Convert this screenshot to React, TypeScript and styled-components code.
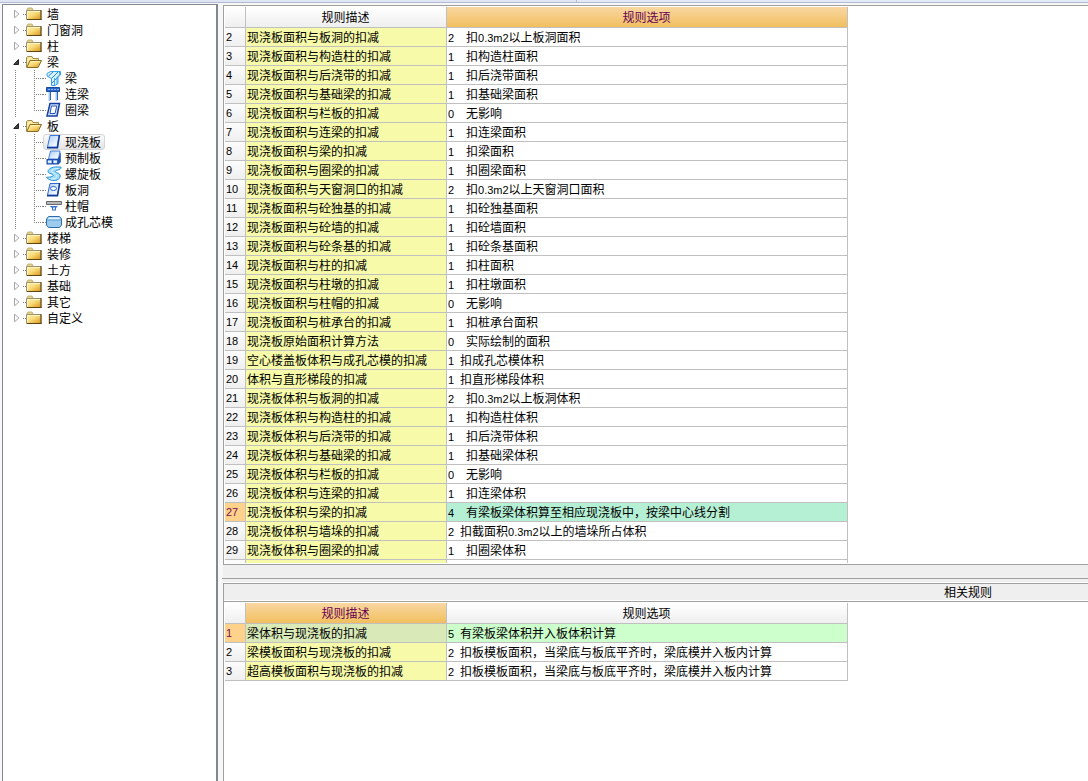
import React, { useState } from "react";
import styled, { createGlobalStyle, css } from "styled-components";

const dotsDown = "repeating-linear-gradient(to bottom, #808080 0 1px, transparent 1px 2px)";
const dotsRight = "repeating-linear-gradient(to right, #808080 0 1px, transparent 1px 2px)";

const GlobalStyle = createGlobalStyle`
  * { box-sizing: border-box; }
  body {
    margin: 0;
    background: #f7f7f8;
    color: #000;
    font: 12px/16px "Noto Sans CJK SC", sans-serif;
  }
`;

const Page = styled.div`
  display: flex;
  flex-direction: column;
  min-height: 100vh;
`;

const TopEdge = styled.div`
  display: flex;
  height: 3px;
  border-bottom: 1px solid #b3bbd2;
`;

const TopEdgePart = styled.div<{ $wide?: boolean }>`
  flex: ${(p) => (p.$wide ? "53 1 0" : "47 1 0")};
  background: ${(p) => (p.$wide ? "#dfe5f3" : "#e4e9f8")};
  border-right: ${(p) => (p.$wide ? "1px solid #b3bbd2" : "0")};
`;

const Workspace = styled.div`
  display: flex;
  flex: 1;
`;

const TreePanel = styled.nav`
  flex: 0 0 216px;
  margin: 1px 5px 0 2px;
  padding-top: 1px;
  border: solid #828790;
  border-width: 1px 2px 0 1px;
  background: #fff;
`;

const TreeList = styled.ul`
  margin: 0;
  padding: 0;
  list-style: none;
`;

const TreeRow = styled.div`
  display: flex;
  height: 16px;
`;

const Toggle = styled.button`
  display: flex;
  align-items: center;
  width: 20px;
  padding: 0 0 0 10px;
  border: 0;
  background: none;
`;

const Branch = styled.span<{ $last: boolean }>`
  width: 40px;
  background:
    ${dotsDown} 12px 0 / 1px 100% no-repeat,
    ${dotsDown} 31px 0 / 1px ${(p) => (p.$last ? "9px" : "100%")} no-repeat,
    ${dotsRight} 33px 8px / 7px 1px no-repeat;
`;

const Node = styled.button<{ $nested?: boolean; $selected?: boolean }>`
  display: flex;
  align-items: center;
  gap: ${(p) => (p.$nested ? 3 : 5)}px;
  padding: 0 3px 0 2px;
  border: 1px solid transparent;
  border-radius: 3px;
  color: inherit;
  font: inherit;
  line-height: 14px;
  white-space: nowrap;
  background: ${dotsRight} 0 8px / 3px 1px no-repeat border-box;
  ${(p) =>
    p.$selected &&
    css`
      border-color: #d6d6d6;
      background: linear-gradient(#fafafa, #e4e4e4);
    `}
`;

const Icon = styled.svg`
  flex: none;
  display: block;
`;

const Content = styled.main`
  display: flex;
  flex: 1;
  flex-direction: column;
  min-width: 0;
  padding-top: 2px;
`;

const GridPanel = styled.section<{ $fill?: boolean }>`
  flex: ${(p) => (p.$fill ? "1 0 auto" : "0 0 560px")};
  padding: 1px 0 0 1px;
  border: solid #a0a0a0;
  border-width: 1px 0 ${(p) => (p.$fill ? 0 : 1)}px 1px;
  background: #fff;
  overflow: hidden;
`;

const GridView = styled.div`
  height: 556px;
  overflow: hidden;
`;

const Splitter = styled.div`
  height: 18px;
  padding-top: 13px;
  background: #efefef;
  border-bottom: 1px solid #fff;
`;

const SplitterLine = styled.div`
  height: 1px;
  margin-left: -1px;
  background: #a0a0a0;
`;

const PanelTitle = styled.h2`
  height: 18px;
  margin: 0;
  padding-right: 96px;
  border: solid #a0a0a0;
  border-width: 1px 0 0 1px;
  box-shadow: inset 0 -1px #fff;
  background: #efefef;
  font-size: 12px;
  font-weight: 400;
  line-height: 16px;
  text-align: right;
`;

const Grid = styled.table`
  width: 623px;
  table-layout: fixed;
  border-collapse: separate;
  border-spacing: 0;
`;

const Col = styled.col<{ $w: number }>`
  width: ${(p) => p.$w}px;
`;

const cellLines = css`
  border: solid #c0c0c0;
  border-width: 0 1px 1px 0;
  overflow: hidden;
  white-space: nowrap;
`;

const HeadCell = styled.th<{ $active?: boolean }>`
  ${cellLines}
  height: 21px;
  padding: 0 1px 0 0;
  font-weight: 400;
  line-height: 20px;
  color: ${(p) => (p.$active ? "#660055" : "#000")};
  background: ${(p) =>
    p.$active ? "linear-gradient(#f9d7a2, #f1bf5e)" : "linear-gradient(#ffffff, #efefef)"};
`;

const RowNumber = styled.th<{ $active?: boolean }>`
  ${cellLines}
  height: 19px;
  padding: 0 0 0 1px;
  font: 400 11px/16px "Liberation Sans", sans-serif;
  text-align: left;
  vertical-align: middle;
  color: ${(p) => (p.$active ? "#7a1050" : "#000")};
  background: ${(p) => (p.$active ? "#ffd28c" : "linear-gradient(#fcfcfc, #efefef)")};
`;

const Cell = styled.td<{ $bg?: string }>`
  ${cellLines}
  height: 19px;
  padding: 0 0 0 1px;
  line-height: 16px;
  vertical-align: middle;
  background: ${(p) => p.$bg || "#fff"};
`;

const Latin = styled.span`
  font-family: "Liberation Sans", sans-serif;
  font-size: 11px;
  line-height: 12px;
`;

const Code = styled(Latin)<{ $wide: boolean }>`
  display: inline-block;
  width: ${(p) => (p.$wide ? 18 : 12)}px;
`;

type Shape =
  | "folder" | "open" | "beam" | "link" | "ring" | "slab"
  | "precast" | "spiral" | "hole" | "cap" | "core";

const drawings: Record<Shape, React.ReactNode> = {
  folder: (
    <>
      <path d="M1 3.5 L2 2 H6 L7 3.5 V5 H1 Z" fill="#e9d68e" stroke="#a8955b" strokeWidth="0.7" />
      <path d="M0.5 4.5 H15 V13.5 H0.5 Z" fill="url(#gold)" stroke="#9c906e" />
      <path d="M1 13.5 H15.5 M15 4 V14" stroke="#5c4311" fill="none" />
      <path d="M1.5 12.5 V5.5 H14" stroke="#fff6bd" fill="none" />
    </>
  ),
  open: (
    <>
      <path d="M0.5 13 V3.5 L2 2.5 H6 L7 4.5 H12.5 V7" fill="#f7e9a0" stroke="#a18c4f" />
      <path d="M4 6.5 H15.5 L12 13.5 H0.8 Z" fill="url(#gold)" stroke="#8a6a22" />
      <path d="M4.7 7.5 H14" stroke="#fff3ae" />
    </>
  ),
  beam: (
    <>
      <path d="M1 3.5 L4.5 1.5 H14.5 V5 L12 7 V13.5 L9 15.5 H5.5 V8.5 L1 6 Z" fill="#d5f0ff" stroke="#3aa0e4" />
      <path d="M2.5 6 L7 2 M5.5 8.5 L12 2 M6 13 L12 7" stroke="#2387d6" />
      <path d="M13.5 2 V5 L11 7.5 V14 M8.5 8 V15" stroke="#4ba7e6" fill="none" />
    </>
  ),
  link: (
    <>
      <path d="M0.5 1.5 H13.5 V5.5 H0.5 Z" fill="#2d66c4" stroke="#174a9e" />
      <path d="M2 3.5 H13" stroke="#82b0f0" strokeDasharray="2 1" />
      <path d="M3.5 6 V15 M10.5 6 V15" stroke="#a5c8f7" strokeWidth="2" />
      <path d="M4.5 6 V14 M11.5 6 V14" stroke="#2864c8" />
    </>
  ),
  ring: (
    <>
      <path d="M4 1.5 H13.5 L11 14 H1 Z" fill="#cfe3ff" stroke="#173f9f" strokeWidth="1.5" />
      <path d="M5.5 4 H10.8 L9 11.5 H4 Z" fill="#fff" stroke="#2456bd" />
    </>
  ),
  slab: (
    <>
      <path d="M4 1.5 H13 L11 13 H1.5 Z" fill="url(#glass)" stroke="#3c79dc" />
      <path d="M13.5 1 L11.5 13.8 H1" stroke="#143c99" strokeWidth="1.5" fill="none" />
    </>
  ),
  precast: (
    <>
      <path d="M4.5 1 H14 L12.5 9 H2.5 Z" fill="url(#glass)" stroke="#4c80d8" />
      <path d="M0.5 9 H12 L14.8 2 V12 L12.5 14.5 H0.5 Z" fill="#1d4db0" />
      <path d="M2 10.5 H5.5 V13 H2 Z M7.5 10.5 H11 V13 H7.5 Z" fill="#f2f9ff" stroke="#9cc6f5" strokeWidth="0.6" />
    </>
  ),
  spiral: (
    <>
      <path
        d="M15 1 C11 1 8 0.5 5 2 C1 4 1 7 5 7.8 C8 8.5 8 10 5 10.8 C3 11.3 1 11.3 0.5 11.5 C3 14 7 15.5 11 14 C15.5 12 15 8 11.5 7 C8.5 6 8.5 5 11 4.2 C13.5 3.5 15.5 3 15 1 Z"
        fill="#9fdcf8"
        stroke="#2a92d8"
      />
      <path d="M12.5 2.5 C8 2.5 4.5 3.5 5.5 5.5 C7 7 11 8 11 10 C11 12 8 13 5 12.7" stroke="#dcf5ff" fill="none" />
    </>
  ),
  hole: (
    <>
      <path d="M4 1.5 H13.5 L11.5 13 H1.5 Z" fill="url(#glass)" stroke="#3567c8" />
      <path d="M13.7 1 L11.5 13.8 H1" stroke="#143c99" strokeWidth="1.5" fill="none" />
      <ellipse cx="7.5" cy="6.5" rx="3" ry="2" fill="#fff" stroke="#1f62d0" />
    </>
  ),
  cap: (
    <>
      <path d="M0.5 3.5 H15.5 V6.5 H0.5 Z" fill="#b8b8b8" stroke="#6a6a6a" />
      <path d="M3.5 8 H12 L10 10 V12.5 H6 V10 Z" fill="#3c76d0" />
      <path d="M7 9.5 H9 V11.5 H7 Z" fill="#dcecff" />
    </>
  ),
  core: (
    <>
      <path d="M2.5 2.5 H13.5 L15.5 5 V11 L13.5 13.5 H2.5 L0.5 11 V5 Z" fill="#9dcbee" stroke="#2d6cab" />
      <path d="M1.5 5.5 L3 3.5 H13 L14.5 5.5 Z" fill="#e3f4ff" />
      <path d="M1 6 H15" stroke="#5b9fd3" />
    </>
  ),
};

function Glyph({ shape }: { shape: Shape }) {
  return (
    <Icon width="16" height="16" viewBox="0 0 16 16" fill="none" aria-hidden="true">
      {drawings[shape]}
    </Icon>
  );
}

function Gradients() {
  return (
    <Icon width="0" height="0" aria-hidden="true">
      <defs>
        <linearGradient id="gold" x1="0" y1="0" x2="1" y2="1">
          <stop offset="0" stopColor="#fff3a6" />
          <stop offset="0.45" stopColor="#f8dc7e" />
          <stop offset="1" stopColor="#dc9412" />
        </linearGradient>
        <linearGradient id="glass" x1="0" y1="0" x2="1" y2="1">
          <stop offset="0" stopColor="#a9cbfa" />
          <stop offset="0.7" stopColor="#ecf5ff" />
          <stop offset="1" stopColor="#ffffff" />
        </linearGradient>
      </defs>
    </Icon>
  );
}

function Arrow({ open }: { open: boolean }) {
  return (
    <Icon width="8" height="10" viewBox="0 0 8 10" aria-hidden="true">
      {open ? (
        <path d="M5.5 2.5 V7.5 H0.8 Z" fill="#404040" stroke="#222" />
      ) : (
        <path d="M1.5 1.2 L5.8 5 L1.5 8.8 Z" fill="#fff" stroke="#a6a6a6" />
      )}
    </Icon>
  );
}

type Child = [string, Shape];
const tree: { name: string; children?: Child[] }[] = [
  { name: "墙" },
  { name: "门窗洞" },
  { name: "柱" },
  { name: "梁", children: [["梁", "beam"], ["连梁", "link"], ["圈梁", "ring"]] },
  {
    name: "板",
    children: [
      ["现浇板", "slab"],
      ["预制板", "precast"],
      ["螺旋板", "spiral"],
      ["板洞", "hole"],
      ["柱帽", "cap"],
      ["成孔芯模", "core"],
    ],
  },
  { name: "楼梯" },
  { name: "装修" },
  { name: "土方" },
  { name: "基础" },
  { name: "其它" },
  { name: "自定义" },
];

// [description, option code, option text, narrow gap after the code]
type Rule = [string, number, string, boolean?];

const rules: Rule[] = [
  ["现浇板面积与板洞的扣减", 2, "扣0.3m2以上板洞面积"],
  ["现浇板面积与构造柱的扣减", 1, "扣构造柱面积"],
  ["现浇板面积与后浇带的扣减", 1, "扣后浇带面积"],
  ["现浇板面积与基础梁的扣减", 1, "扣基础梁面积"],
  ["现浇板面积与栏板的扣减", 0, "无影响"],
  ["现浇板面积与连梁的扣减", 1, "扣连梁面积"],
  ["现浇板面积与梁的扣减", 1, "扣梁面积"],
  ["现浇板面积与圈梁的扣减", 1, "扣圈梁面积"],
  ["现浇板面积与天窗洞口的扣减", 2, "扣0.3m2以上天窗洞口面积"],
  ["现浇板面积与砼独基的扣减", 1, "扣砼独基面积"],
  ["现浇板面积与砼墙的扣减", 1, "扣砼墙面积"],
  ["现浇板面积与砼条基的扣减", 1, "扣砼条基面积"],
  ["现浇板面积与柱的扣减", 1, "扣柱面积"],
  ["现浇板面积与柱墩的扣减", 1, "扣柱墩面积"],
  ["现浇板面积与柱帽的扣减", 0, "无影响"],
  ["现浇板面积与桩承台的扣减", 1, "扣桩承台面积"],
  ["现浇板原始面积计算方法", 0, "实际绘制的面积"],
  ["空心楼盖板体积与成孔芯模的扣减", 1, "扣成孔芯模体积", true],
  ["体积与直形梯段的扣减", 1, "扣直形梯段体积", true],
  ["现浇板体积与板洞的扣减", 2, "扣0.3m2以上板洞体积"],
  ["现浇板体积与构造柱的扣减", 1, "扣构造柱体积"],
  ["现浇板体积与后浇带的扣减", 1, "扣后浇带体积"],
  ["现浇板体积与基础梁的扣减", 1, "扣基础梁体积"],
  ["现浇板体积与栏板的扣减", 0, "无影响"],
  ["现浇板体积与连梁的扣减", 1, "扣连梁体积"],
  ["现浇板体积与梁的扣减", 4, "有梁板梁体积算至相应现浇板中，按梁中心线分割"],
  ["现浇板体积与墙垛的扣减", 2, "扣截面积0.3m2以上的墙垛所占体积", true],
  ["现浇板体积与圈梁的扣减", 1, "扣圈梁体积"],
];

const related: Rule[] = [
  ["梁体积与现浇板的扣减", 5, "有梁板梁体积并入板体积计算", true],
  ["梁模板面积与现浇板的扣减", 2, "扣板模板面积，当梁底与板底平齐时，梁底模并入板内计算", true],
  ["超高模板面积与现浇板的扣减", 2, "扣板模板面积，当梁底与板底平齐时，梁底模并入板内计算", true],
];

function Mixed({ text }: { text: string }) {
  return (
    <>
      {text.split(/([0-9a-z.]+)/).map((part, i) => (i % 2 ? <Latin key={i}>{part}</Latin> : part))}
    </>
  );
}

interface RuleGridProps {
  label: string;
  rows: Rule[];
  first: number;
  selected: number;
  activeColumn: 0 | 1;
  nameBg: string;
  optionBg: string;
  more?: boolean;
}

const YELLOW = "#f6faa9";

function RuleGrid({ label, rows, first, selected, activeColumn, nameBg, optionBg, more }: RuleGridProps) {
  return (
    <Grid aria-label={label}>
      <colgroup>
        <Col $w={21} />
        <Col $w={201} />
        <Col $w={401} />
      </colgroup>
      <thead>
        <tr>
          <HeadCell />
          <HeadCell scope="col" $active={activeColumn === 0}>规则描述</HeadCell>
          <HeadCell scope="col" $active={activeColumn === 1}>规则选项</HeadCell>
        </tr>
      </thead>
      <tbody>
        {rows.map(([name, code, option, narrow], i) => {
          const number = first + i;
          const active = number === selected;
          return (
            <tr key={number}>
              <RowNumber scope="row" $active={active}>{number}</RowNumber>
              <Cell $bg={active ? nameBg : YELLOW}>{name}</Cell>
              <Cell $bg={active ? optionBg : undefined}>
                <Code $wide={!narrow}>{code}</Code>
                <Mixed text={option} />
              </Cell>
            </tr>
          );
        })}
        {more && (
          <tr>
            <RowNumber />
            <Cell $bg={YELLOW} />
            <Cell />
          </tr>
        )}
      </tbody>
    </Grid>
  );
}

function RuleTree() {
  const [open, setOpen] = useState<string[]>(["梁", "板"]);
  const [selected, setSelected] = useState("现浇板");
  const flip = (name: string) =>
    setOpen((list) => (list.includes(name) ? list.filter((n) => n !== name) : [...list, name]));

  return (
    <TreeList>
      {tree.map(({ name, children }) => {
        const expanded = open.includes(name);
        return (
          <li key={name}>
            <TreeRow>
              <Toggle type="button" aria-label={name} aria-expanded={expanded} onClick={() => flip(name)}>
                <Arrow open={expanded} />
              </Toggle>
              <Node type="button" onClick={() => flip(name)}>
                <Glyph shape={expanded ? "open" : "folder"} />
                {name}
              </Node>
            </TreeRow>
            {expanded && children && (
              <TreeList>
                {children.map(([child, shape], i) => (
                  <li key={child}>
                    <TreeRow>
                      <Branch $last={i === children.length - 1} />
                      <Node type="button" $nested $selected={child === selected} onClick={() => setSelected(child)}>
                        <Glyph shape={shape} />
                        {child}
                      </Node>
                    </TreeRow>
                  </li>
                ))}
              </TreeList>
            )}
          </li>
        );
      })}
    </TreeList>
  );
}

export default function App() {
  return (
    <Page>
      <GlobalStyle />
      <TopEdge>
        <TopEdgePart $wide />
        <TopEdgePart />
      </TopEdge>
      <Workspace>
        <TreePanel>
          <RuleTree />
          <Gradients />
        </TreePanel>
        <Content>
          <GridPanel>
            <GridView>
              <RuleGrid
                label="计算规则"
                rows={rules}
                first={2}
                selected={27}
                activeColumn={1}
                nameBg={YELLOW}
                optionBg="#b5f0d5"
                more
              />
            </GridView>
          </GridPanel>
          <Splitter>
            <SplitterLine />
          </Splitter>
          <PanelTitle>相关规则</PanelTitle>
          <GridPanel $fill>
            <RuleGrid
              label="相关规则"
              rows={related}
              first={1}
              selected={1}
              activeColumn={0}
              nameBg="#d9eab8"
              optionBg="#ccffcc"
            />
          </GridPanel>
        </Content>
      </Workspace>
    </Page>
  );
}
